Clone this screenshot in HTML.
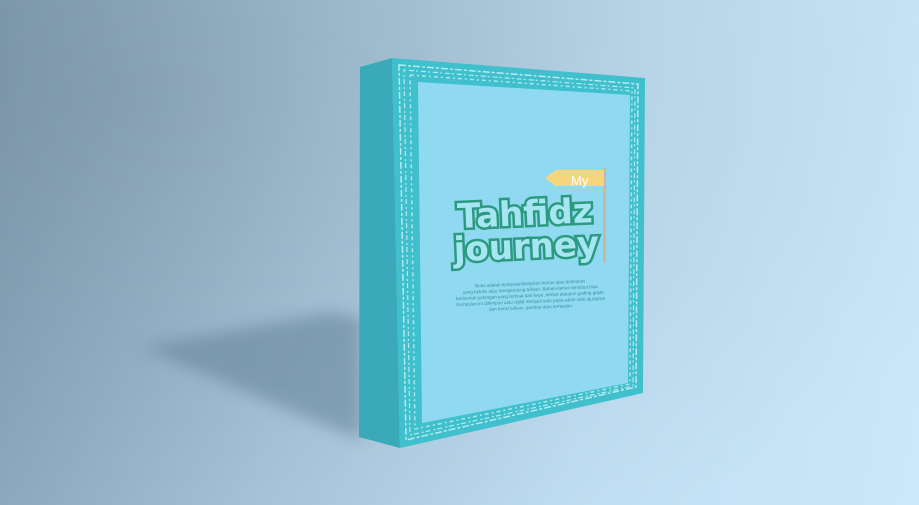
<!DOCTYPE html>
<html><head><style>
html,body{margin:0;padding:0;width:919px;height:505px;overflow:hidden}
body{background:linear-gradient(100deg,#86a2b8 0%,#a9c6db 35%,#c0def2 65%,#cbe8fa 100%)}
</style></head><body>
<svg width="919" height="505" viewBox="0 0 919 505" style="position:absolute;left:0;top:0">
<defs>
<filter id="b" x="-20%" y="-20%" width="140%" height="140%"><feGaussianBlur stdDeviation="8"/></filter>
<radialGradient id="g" cx="0.15" cy="0.2" r="1"><stop offset="0" stop-color="#000" stop-opacity="0.1"/><stop offset="1" stop-color="#000" stop-opacity="0"/></radialGradient>
</defs>
<rect width="919" height="505" fill="url(#g)"/>
<polygon points="140,347 330,312 362,318 362,440 300,415" fill="#66859b" opacity="0.6" filter="url(#b)"/>
<polygon points="360,67 392,58 400,448 359,437" fill="#3aa9b9"/>
<polygon points="392,58 645,78 643,393 400,448" fill="#40bfcd"/>
<polygon points="399,65 638,84 636,387 406,440" fill="none" stroke="#b5eaf0" stroke-width="1.5" stroke-dasharray="7 2 3 2"/>
<polygon points="404,70 635,88 633,386 410,435" fill="none" stroke="#b5eaf0" stroke-width="1.2" stroke-dasharray="2 3 5 2"/>
<polygon points="410,75 632,91 630,384 415,429" fill="none" stroke="#a9e6ec" stroke-width="1.5" stroke-dasharray="4 3 2 3"/>
<polygon points="418,82 630,95 628,383 422,423" fill="#8fdaf1"/>
<g transform="translate(527,215) rotate(-2.5)" font-family="DejaVu Sans, sans-serif" font-weight="bold" text-anchor="middle">
<text x="-2" y="10" font-size="34" fill="#a6e6f2" stroke="#2c9a80" stroke-width="5" paint-order="stroke">Tahfidz</text>
<text x="-2" y="43" font-size="34" fill="#a6e6f2" stroke="#2c9a80" stroke-width="5" paint-order="stroke">journey</text>
<g font-family="Liberation Sans, sans-serif" font-weight="normal" font-size="4.6" fill="#3a8f9a">
<text x="0" y="70">Buku adalah kumpulan/lampiran kertas atau lembaran</text>
<text x="0" y="76">yang ketulis atau mengandung tulisan. Bahan-bahan tersebut bisa</text>
<text x="0" y="82">berbentuk potongan yang terbuat dari kayu, kertas ataupun gading gajah.</text>
<text x="0" y="88">Kumpulan ini dihimpun atau dijilid menjadi satu pada salah satu ujungnya</text>
<text x="0" y="94">dan berisi tulisan, gambar atau tempelan.</text>
</g>
</g>
<rect x="603" y="168" width="3" height="95" fill="#c9b8a0"/>
<polygon points="545,178 556,170 604,170 604,186 556,186" fill="#f6d67c"/>
<text x="571" y="185" font-family="Liberation Sans, sans-serif" font-size="13" fill="#fff">My</text>
</svg>
</body></html>
